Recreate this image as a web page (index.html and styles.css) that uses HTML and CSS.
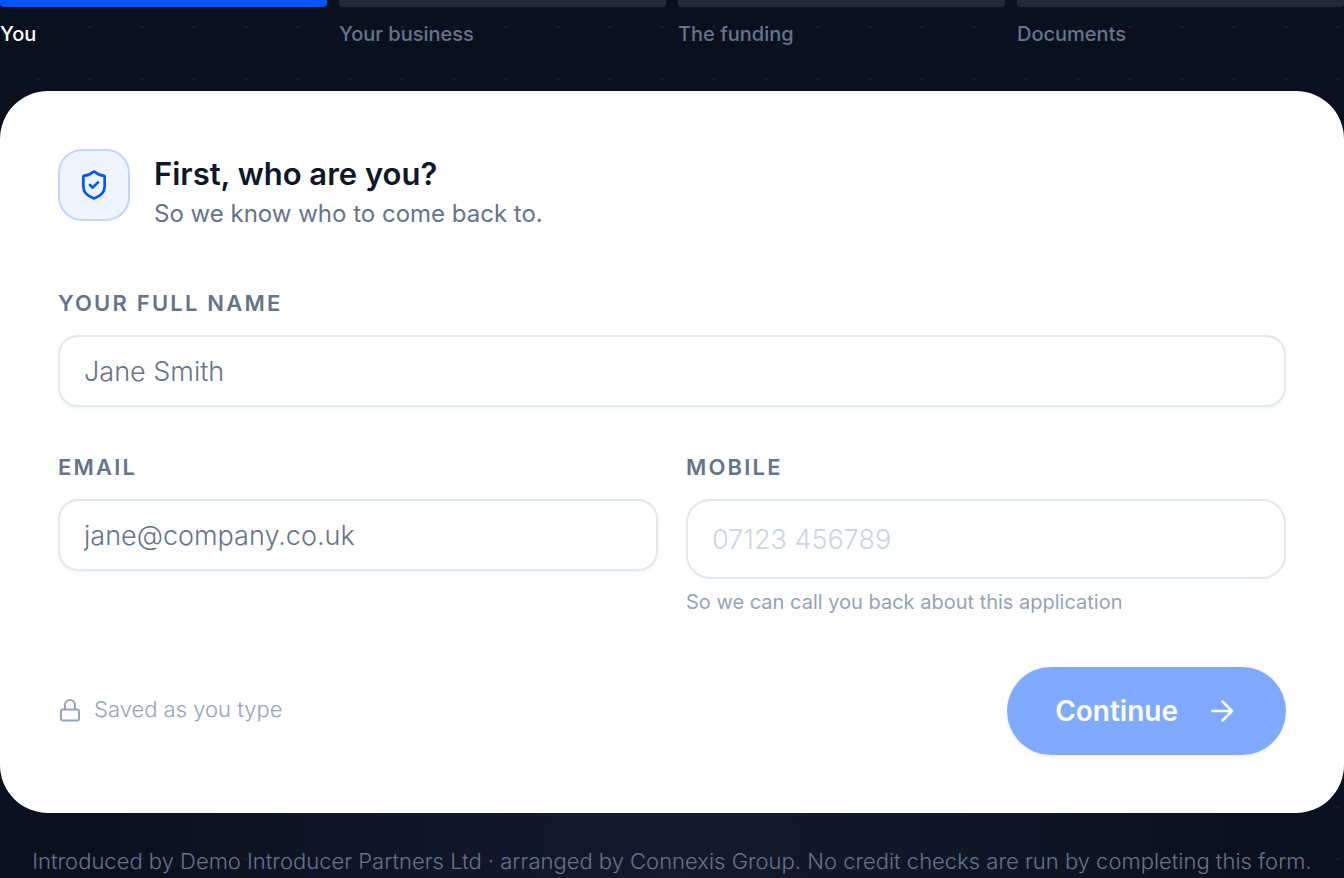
FILE: index.html
```html
<!DOCTYPE html>
<html lang="en">
    <head>
        <meta charset="utf-8">
        <meta name="viewport" content="width=device-width, initial-scale=1">
        <title>Funding application</title>
        <link rel="stylesheet" href="styles.css">
    </head>
    <body>
        <ol class="steps">
            <li class="step active" aria-current="step">You</li>
            <li class="step">Your business</li>
            <li class="step">The funding</li>
            <li class="step">Documents</li>
        </ol>

        <main>
            <form class="card">
                <div class="card-head">
                    <div class="card-icon">
                        <svg viewBox="0 0 24 24" aria-hidden="true">
                            <path d="M20 13c0 5-3.5 7.500-7.660 8.950a1 1 0 0 1-.670-.010C7.500 20.500 4 18 4 13V6a1 1 0 0 1 1-1c2 0 4.500-1.200 6.240-2.720a1.170 1.170 0 0 1 1.520 0C14.510 3.810 17 5 19 5a1 1 0 0 1 1 1z"/>
                            <path d="m9 12 2 2 4-4"/>
                        </svg>
                    </div>
                    <div class="card-title">
                        <h1>First, who are you?</h1>
                        <p>So we know who to come back to.</p>
                    </div>
                </div>

                <div class="fields">
                    <div class="field wide">
                        <label for="fullName">Your full name</label>
                        <input type="text" id="fullName" placeholder="Jane Smith">
                    </div>
                    <div class="field">
                        <label for="email">Email</label>
                        <input type="email" id="email" placeholder="jane@company.co.uk">
                    </div>
                    <div class="field">
                        <label for="mobile">Mobile</label>
                        <input type="tel" id="mobile" class="tall" placeholder="07123 456789" aria-describedby="mobileHint">
                        <p class="hint" id="mobileHint">So we can call you back about this application</p>
                    </div>
                </div>

                <div class="actions">
                    <div class="saved">
                        <svg viewBox="0 0 24 24" aria-hidden="true">
                            <rect x="3" y="10.500" width="18" height="11" rx="2"/>
                            <path d="M7 10.500V6a5 5 0 0 1 10 0v4.500"/>
                        </svg>
                        <span>Saved as you type</span>
                    </div>
                    <button type="submit" disabled>
                        Continue
                        <svg viewBox="0 0 24 24" aria-hidden="true">
                            <path d="M2.500 12h19M12.500 2.500l9.500 9.500-9.500 9.500"/>
                        </svg>
                    </button>
                </div>
            </form>
        </main>

        <footer>Introduced by Demo Introducer Partners Ltd · arranged by Connexis Group. No credit checks are run by completing this form.</footer>
    </body>
</html>
```

FILE: styles.css
```css
*{
    box-sizing:border-box;
}
body{
    margin:0;
    min-height:100vh;
    font-family:Inter,"Liberation Sans",sans-serif;
    color:#0f172a;
    background-color:#0a111e;
    background-image:
        radial-gradient(circle at 26px 26px,rgba(255,255,255,0.05) 1px,transparent 2px),
        radial-gradient(ellipse at 50% 100%,#131a2d,transparent 60%);
    background-size:52px 52px,100% 100%;
    background-position:12px 1px,0 0;
}
h1,p{
    margin:0;
}
svg{
    fill:none;
    stroke:currentColor;
    stroke-width:2;
    stroke-linecap:round;
    stroke-linejoin:round;
}

/* progress steps */
.steps{
    display:grid;
    grid-template-columns:repeat(4,1fr);
    gap:12px;
    margin:0;
    padding:0;
    list-style:none;
}
.step{
    font-size:20px;
    line-height:28px;
    font-weight:500;
    color:#64748b;
}
.step::before{
    content:"";
    display:block;
    height:7px;
    margin-bottom:13px;
    border-radius:0 0 4px 4px;
    background-color:#232936;
}
.step.active{
    color:#fff;
}
.step.active::before{
    background-color:#0055ff;
}

/* form card */
.card{
    margin-top:43px;
    padding:58px;
    border-radius:48px;
    background-color:#fff;
}
.card-head{
    display:flex;
    gap:24px;
    margin-bottom:55px;
}
.card-icon{
    display:flex;
    align-items:center;
    justify-content:center;
    flex:none;
    width:72px;
    height:72px;
    border:2px solid #c3d6fc;
    border-radius:24px;
    background-color:#eff4ff;
    color:#0055ff;
}
.card-icon svg{
    width:32px;
    height:32px;
}
.card-title{
    padding-top:5px;
}
.card-title h1{
    font-size:31px;
    line-height:40px;
    font-weight:600;
}
.card-title p{
    font-size:24px;
    line-height:40px;
    color:#64748b;
}
.fields{
    display:grid;
    grid-template-columns:1fr 1fr;
    gap:46px 28px;
}
.wide{
    grid-column:1 / -1;
}
.field label{
    display:block;
    margin-bottom:18px;
    font-size:22px;
    line-height:28px;
    font-weight:600;
    letter-spacing:0.1em;
    text-transform:uppercase;
    color:#64748b;
}
.field input{
    display:block;
    width:100%;
    height:72px;
    padding:0 24px;
    border:2px solid #e2e8f0;
    border-radius:20px;
    background-color:#fff;
    box-shadow:0 2px 4px rgba(15,23,42,0.04);
    font-family:inherit;
    font-size:27px;
    font-weight:300;
    color:#0f172a;
}
.field input::placeholder{
    color:#64748b;
}
.field input.tall{
    height:80px;
    border-radius:24px;
    box-shadow:none;
}
.field input.tall::placeholder{
    color:#cbd5e1;
}
.hint{
    margin-top:9px;
    font-size:20px;
    line-height:28px;
    color:#94a3b8;
}
.actions{
    display:flex;
    align-items:center;
    justify-content:space-between;
    margin-top:51px;
}
.saved{
    display:flex;
    align-items:center;
    gap:12px;
    font-size:22px;
    line-height:28px;
    font-weight:300;
    color:#94a3b8;
}
.saved svg{
    width:24px;
    height:24px;
}
.saved span{
    padding-bottom:4px;
}
button{
    display:flex;
    align-items:center;
    gap:32px;
    height:88px;
    padding:0 52px 0 48px;
    border:none;
    border-radius:44px;
    background-color:#80aaff;
    box-shadow:0 2px 4px rgba(15,23,42,0.05);
    font-family:inherit;
    font-size:28px;
    font-weight:600;
    color:#fff;
}
button svg{
    width:24px;
    height:24px;
    stroke-width:2.5;
}

footer{
    margin-top:32px;
    font-size:22px;
    line-height:32px;
    font-weight:300;
    text-align:center;
    color:#64748b;
}
```
